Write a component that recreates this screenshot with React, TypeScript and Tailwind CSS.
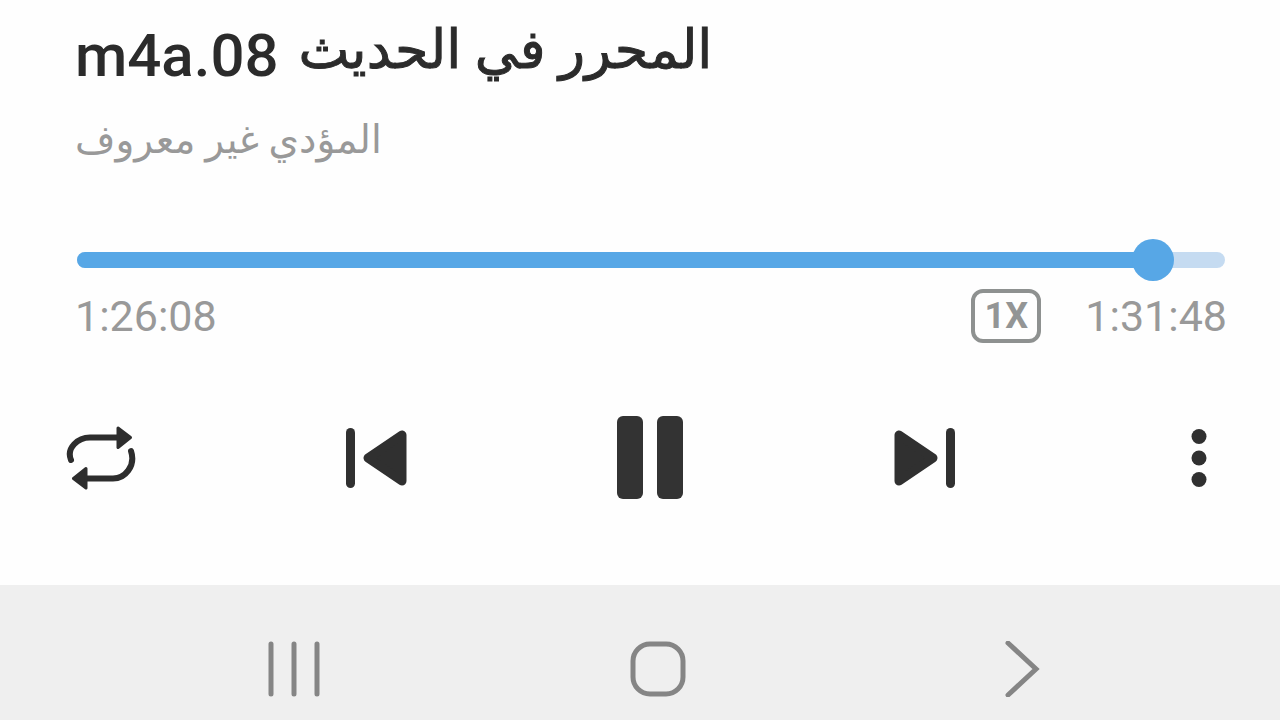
import React, { useState } from 'react'

interface IIconButton {
  label: string
  className?: string
  children: React.ReactNode
}

const DURATION = 5508
const START = 5168

function formatTime (seconds: number) {
  const pad = (value: number) => String(value).padStart(2, '0')
  return `${Math.floor(seconds / 3600)}:${pad(Math.floor(seconds / 60) % 60)}:${pad(seconds % 60)}`
}

const IconButton = ({ label, className = '', children }: IIconButton) => (
  <button type="button" aria-label={label} className={`flex items-center justify-center cursor-pointer ${className}`}>
    {children}
  </button>
)

const RepeatIcon = () => (
  <svg width="70" height="64" viewBox="0 0 70 64" fill="none">
    <path d="M5 34C0 22 12 11.500 24 11.500H52" stroke="#2d2d2d" strokeWidth="6" strokeLinecap="round" />
    <path d="M65 25C70 40 59 52.500 47 52.500H18" stroke="#2d2d2d" strokeWidth="6" strokeLinecap="round" />
    <path d="M52 2L64.500 11.500L52 21.500Z" fill="#2d2d2d" stroke="#2d2d2d" strokeWidth="3" strokeLinejoin="round" />
    <path d="M20 42.500L7.500 52.500L20 62Z" fill="#2d2d2d" stroke="#2d2d2d" strokeWidth="3" strokeLinejoin="round" />
  </svg>
)

const PreviousIcon = () => (
  <svg width="62" height="62" viewBox="0 0 62 62" fill="#303030">
    <rect x="1" y="1" width="9" height="60" rx="4.5" />
    <path d="M23 31L57 8V54Z" stroke="#303030" strokeWidth="9" strokeLinejoin="round" />
  </svg>
)

const NextIcon = () => (
  <svg width="62" height="62" viewBox="0 0 62 62" fill="#303030">
    <path d="M5 8V54L39 31Z" stroke="#303030" strokeWidth="9" strokeLinejoin="round" />
    <rect x="52" y="1" width="9" height="60" rx="4.5" />
  </svg>
)

const PauseIcon = () => (
  <svg width="66" height="84" viewBox="0 0 66 84" fill="#333333">
    <rect x="0" y="0" width="26" height="83" rx="6" />
    <rect x="40" y="0" width="26" height="83" rx="6" />
  </svg>
)

const MoreIcon = () => (
  <svg width="16" height="60" viewBox="0 0 16 60" fill="#303030">
    <circle cx="8" cy="8.5" r="7.5" />
    <circle cx="8" cy="30" r="7.5" />
    <circle cx="8" cy="51.5" r="7.5" />
  </svg>
)

const App = () => {
  const [position, setPosition] = useState(START)

  return (
    <div className="flex flex-col min-h-screen bg-[#fefefe] font-[Roboto,'DejaVu_Sans',sans-serif]">
      <main className="pb-[85px]">
        <section className="pl-[75px] pr-[53px] pt-5">
          <h1 dir="rtl" className="flex items-start justify-end gap-5 font-medium text-[#2b2b2b] whitespace-nowrap">
            <span className="text-[54px] leading-[60px] [-webkit-text-stroke:1px_#2b2b2b]">المحرر في الحديث</span>
            <span className="text-[60px] leading-[72px]">08.m4a</span>
          </h1>
          <p dir="rtl" className="mt-5 text-left text-[39px] leading-[56px] text-[#999999]">المؤدي غير معروف</p>

          <div className="relative mt-[70px] mx-0.5 flex items-center h-11">
            <div className="w-full h-4 rounded-full overflow-hidden bg-[#c5dbf1]">
              <div className="h-full bg-[#57a7e6]" style={{ width: `${(position / DURATION) * 100}%` }} />
            </div>
            <input
              type="range"
              aria-label="موضع التشغيل"
              min={0}
              max={DURATION}
              value={position}
              onChange={(e) => { setPosition(Number(e.target.value)) }}
              className="absolute -inset-x-5 inset-y-0 appearance-none bg-transparent cursor-pointer [&::-webkit-slider-thumb]:appearance-none [&::-webkit-slider-thumb]:w-[42px] [&::-webkit-slider-thumb]:h-[42px] [&::-webkit-slider-thumb]:rounded-full [&::-webkit-slider-thumb]:bg-[#57a7e6]"
            />
          </div>

          <div className="mt-1 flex items-center justify-between text-[43px] leading-[60px] text-[#999999]">
            <span>{formatTime(position)}</span>
            <div className="flex items-center gap-11">
              <button type="button" className="w-[70px] h-[54px] rounded-xl border-4 border-[#8e9190] text-[36px] leading-[46px] font-bold text-[#939595] cursor-pointer">
                1X
              </button>
              <span>{formatTime(DURATION)}</span>
            </div>
          </div>
        </section>

        <div className="mt-[70px] flex items-center justify-between pl-[66px] pr-[46px]">
          <IconButton label="تكرار" className="w-[70px] h-[84px]"><RepeatIcon /></IconButton>
          <IconButton label="السابق" className="w-[70px] h-[84px]"><PreviousIcon /></IconButton>
          <IconButton label="إيقاف مؤقت" className="w-[70px] h-[84px]"><PauseIcon /></IconButton>
          <IconButton label="التالي" className="w-[70px] h-[84px]"><NextIcon /></IconButton>
          <IconButton label="المزيد" className="w-[70px] h-[84px]"><MoreIcon /></IconButton>
        </div>
      </main>

      <nav className="grow flex items-start justify-around pl-28 pr-[76px] pt-14 bg-[#efefef]">
        <IconButton label="التطبيقات الأخيرة">
          <svg width="56" height="56" viewBox="0 0 56 56" stroke="#858585" strokeWidth="5" strokeLinecap="round">
            <path d="M5 3V53M28 3V53M51 3V53" />
          </svg>
        </IconButton>
        <IconButton label="الشاشة الرئيسية">
          <svg width="56" height="56" viewBox="0 0 56 56" fill="none" stroke="#858585" strokeWidth="5">
            <rect x="3" y="3" width="50" height="50" rx="17" />
          </svg>
        </IconButton>
        <IconButton label="رجوع">
          <svg width="56" height="56" viewBox="0 0 56 56" fill="none" stroke="#858585" strokeWidth="5" strokeLinecap="round">
            <path d="M14 2L42 28L14 54" />
          </svg>
        </IconButton>
      </nav>
    </div>
  )
}

export default App
